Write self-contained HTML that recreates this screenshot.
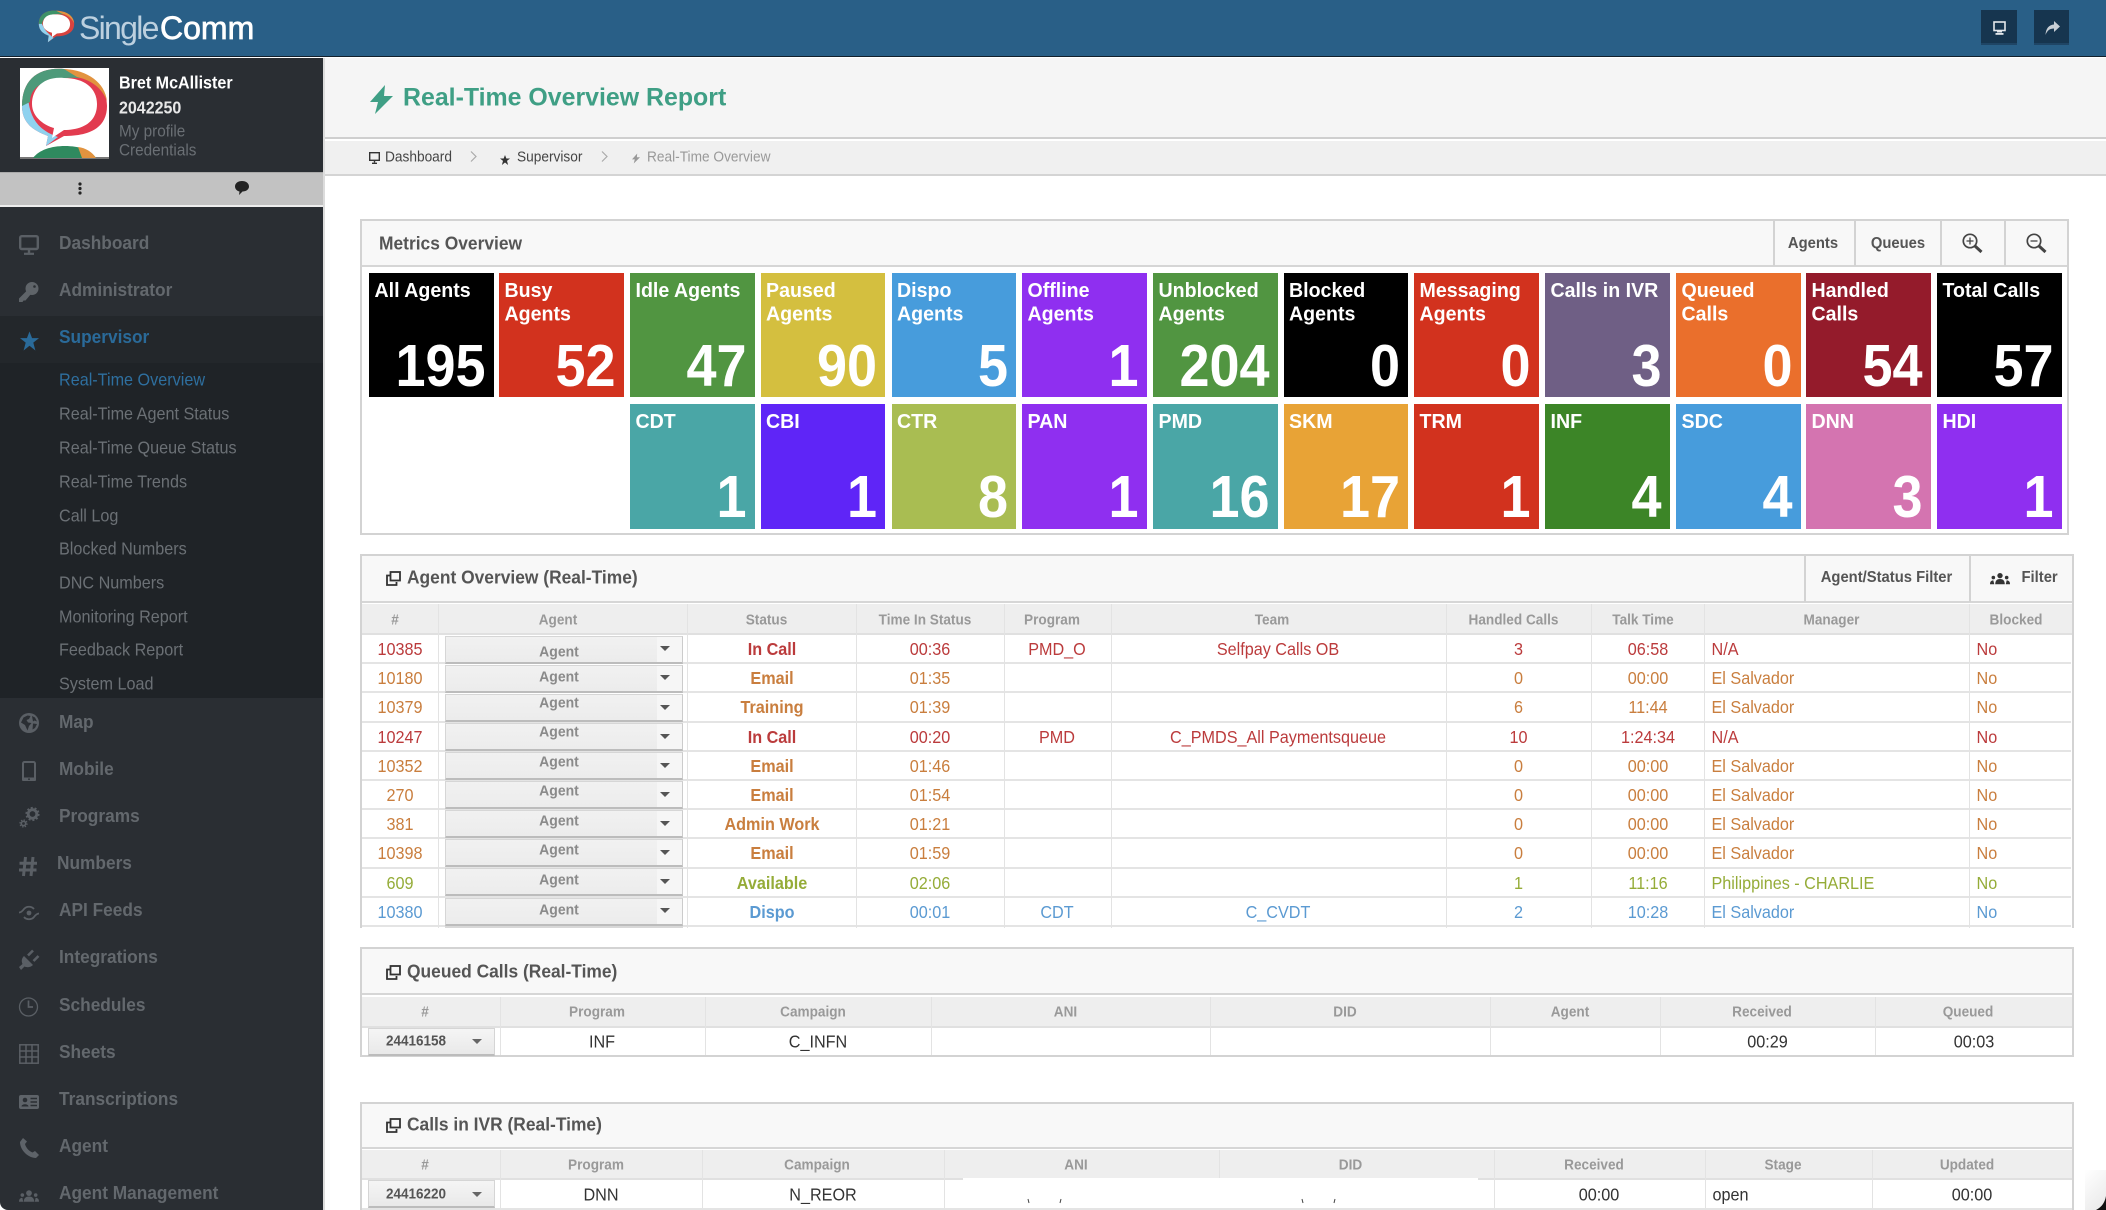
<!DOCTYPE html>
<html><head><meta charset="utf-8"><title>Real-Time Overview Report</title>
<style>
*{box-sizing:border-box}
html{margin:0;padding:0;width:2106px;height:1210px;overflow:hidden}
body{margin:0;padding:0;position:relative;width:2106px;height:1210px;overflow:hidden;background:#fff;font-family:"Liberation Sans",sans-serif}
.a,.c,.l,.e{position:absolute;white-space:nowrap;line-height:1;font-style:normal;text-decoration:none}
.c{transform:translate(-50%,-50%) scaleY(1.08)}
.l{transform:translateY(-50%) scaleY(1.08)}
svg{position:absolute;overflow:visible}
.b{position:absolute;display:block}
.m{left:59px;font-size:17.3px;font-weight:700;color:#63686d}
.s{left:59px;font-size:16.2px;color:#6b7075}
.pt{font-size:17.4px;font-weight:700;color:#555;left:407px}
.tl{position:absolute;width:124.6px;height:124px;overflow:hidden;color:#fff;font-weight:700}
.tl p{position:absolute;left:5.500px;top:6px;margin:0;font-size:19.6px;line-height:22px;white-space:nowrap;transform:scaleY(1.06);transform-origin:0 0}
.tl u{position:absolute;right:8px;top:93px;font-size:54px;line-height:1;text-decoration:none;transform:translateY(-50%) scaleY(1.1)}
.tl.w{height:125px}
.tl.w p{top:6px}
.tl.w u{top:93px}
.pan{position:absolute;border:2px solid #d3d3d3;background:#fff}
.ph{position:absolute;background:#f8f8f8;border-bottom:2px solid #d6d6d6}
.v{position:absolute;width:1px;background:#e3e3e3}
.vv{position:absolute;width:2px;background:#d3d3d3}
.th{position:absolute;background:#eee;border-bottom:2px solid #e0e0e0}
.h{font-size:13.600px;font-weight:700;color:#999}
.hh{font-size:14.800px;font-weight:700;color:#555}
.r{position:absolute;left:362px;width:1709px;height:29.2px;border-bottom:2px solid #e4e4e4;font-size:16.200px}
.r i{position:absolute;top:15px;white-space:nowrap;line-height:1;font-style:normal;transform:translate(-50%,-50%) scaleY(1.06)}
.r i.x{transform:translateY(-50%) scaleY(1.06)}
.r i.st{font-weight:700}
.n1{left:38px}.n2{left:410px}.n3{left:568px}.n4{left:695px}.n5{left:916px}.n6{left:1156.5px}.n7{left:1286px}.n8{left:1349.500px}.n9{left:1614.5px}
.red{color:#bb3b3c}.org{color:#c97e3e}.grn{color:#95ac38}.blu{color:#5b9ad2}
.dd{position:absolute;left:445px;width:238px;height:28px;background:linear-gradient(#f1f1f1,#ececec);border:1px solid #d6d6d6;border-bottom:2px solid #bcbcbc;border-right:1px solid #ccc}
.dd:after{content:"";position:absolute;left:211px;top:0;width:25px;height:100%;background:#f6f6f6}
.ag{left:559px;font-size:14px;font-weight:700;color:#8a8a8a}
.ar{position:absolute;left:660px;width:0;height:0;border-left:5px solid transparent;border-right:5px solid transparent;border-top:5px solid #555}
.btn{position:absolute;left:368px;width:127px;height:28px;background:linear-gradient(#f5f5f5,#e9e9e9);border:1px solid #d5d5d5;border-bottom:2px solid #bcbcbc}
.tx{font-size:16.200px;color:#333}
</style></head><body>

<!-- Top bar -->
<div class="b" style="left:0;top:0;width:2106px;height:57px;background:#295f87;border-bottom:1px solid #12202c"></div>
<svg style="left:38px;top:10px" width="37" height="33" viewBox="0 0 90 90" preserveAspectRatio="none">
<path d="M44 2C18 0 2 14 2 38c0 20 14 28 24 32l-2 18 20-16c22 0 44-8 44-34C88 14 66 4 44 2z" fill="#d8433f"/>
<path d="M2 38c0 20 14 28 24 32l-2 18 14-12C20 60 12 50 8 30z" fill="#8fd2ef"/>
<path d="M44 2C18 0 2 14 2 38l8 0C12 18 30 8 62 12 56 6 50 3 44 2z" fill="#3d9268"/>
<path d="M44 2c24 0 42 12 44 34-6-12-14-22-30-26z" fill="#e2933f"/>
<path d="M44 12C22 10 12 22 12 38c0 14 12 22 22 24l0 12 12-10c16 0 32-6 32-26C78 22 64 12 44 12z" fill="#fff"/>
</svg>
<span class="l" style="left:79px;top:28px;font-size:32px;letter-spacing:-1.7px;color:#bcd0df;transform:translateY(-50%) scaleY(1)">Single</span>
<span class="l" style="left:160px;top:28px;font-size:32px;color:#fff;-webkit-text-stroke:.7px #fff;transform:translateY(-50%) scaleY(1)">Comm</span>
<div class="b" style="left:1981px;top:10px;width:36px;height:35px;background:#16354f;border-bottom:2px solid #1f4565"></div>
<div class="b" style="left:2034px;top:10px;width:35px;height:35px;background:#16354f;border-bottom:2px solid #1f4565"></div>
<svg style="left:1993px;top:21px" width="13" height="14" viewBox="0 0 13 14"><rect x="1" y="1" width="11" height="8.5" fill="none" stroke="#e4e8ec" stroke-width="1.6"/><rect x="4" y="10" width="5" height="1.5" fill="#e4e8ec"/><rect x="2.5" y="12" width="8" height="1.8" fill="#e4e8ec"/></svg>
<svg style="left:2045px;top:21px" width="15" height="14" viewBox="0 0 15 14"><path d="M9 0l6 5.5L9 11V7.5C5 7.500 2.500 9 .5 14 .8 7.500 4 3.800 9 3.500z" fill="#c7ced5"/></svg>

<!-- Sidebar -->
<div class="b" style="left:0;top:58px;width:323px;height:1152px;background:#2a2e33;border-bottom-left-radius:8px"></div>
<div class="b" style="left:323px;top:58px;width:2px;height:1152px;background:#dcdcdc"></div>
<div class="b" style="left:20px;top:68px;width:89px;height:91px;background:#fff;border-bottom:2px solid #777"></div>
<svg style="left:20px;top:68px" width="89" height="90" viewBox="0 0 89 90">
<path d="M44 1C18-1 2 12 2 38c0 20 16 26 26 30l-2 10 18-10c22 0 43-6 43-30C87 14 66 3 44 1z" fill="#e23b4f"/>
<path d="M2 38c0 20 16 26 26 30l-2 10 12-9C18 62 10 50 8 30z" fill="#8fd2ef"/>
<path d="M44 1C18-1 2 12 2 38l8-4C10 16 30 8 62 10 56 5 50 2 44 1z" fill="#4d9a7a"/>
<path d="M44 1c24 1 41 14 43 32-4-10-12-20-30-24z" fill="#e2933f"/>
<path d="M44 10C22 8 12 22 12 36c0 14 14 22 22 24l-2 10 12-8c16 0 33-6 33-26C77 20 64 10 44 10z" fill="#fff"/>
<path d="M13 90c6-8 18-12 32-12 14 0 26 4 31 12z" fill="#2f8a5f"/>
<path d="M58 79c8 1 14 5 18 11H62z" fill="#e2933f"/>
</svg>
<span class="l" style="left:119px;top:82.500px;font-size:16.100px;font-weight:700;color:#fff">Bret McAllister</span>
<span class="l" style="left:119px;top:108.500px;font-size:16px;font-weight:700;color:#e8e8e8">2042250</span>
<span class="l" style="left:119px;top:131.500px;font-size:15.300px;color:#6a6f74">My profile</span>
<span class="l" style="left:119px;top:150.500px;font-size:15.300px;color:#6a6f74">Credentials</span>
<div class="b" style="left:0;top:172px;width:323px;height:35px;background:#c2c2c2;border-top:1px solid #aaa;border-bottom:2px solid #ededed"></div>
<svg style="left:78px;top:182px" width="4" height="13" viewBox="0 0 4 13"><circle cx="2" cy="2" r="1.6" fill="#222"/><circle cx="2" cy="6.500" r="1.600" fill="#222"/><circle cx="2" cy="11" r="1.600" fill="#222"/></svg>
<svg style="left:235px;top:181px" width="14" height="14" viewBox="0 0 14 14"><path d="M7 0C3 0 0 2.300 0 5.500 0 8 2 10 4.500 10.500L4 14l3.500-3.500C11 10.500 14 8.500 14 5.500 14 2.300 11 0 7 0z" fill="#222"/></svg>

<div class="b" style="left:0;top:316px;width:323px;height:47px;background:#23272b"></div>
<div class="b" style="left:0;top:363px;width:323px;height:335px;background:#1f2327"></div>

<!-- Dashboard -->
<svg style="left:19px;top:235px" width="20" height="20" viewBox="0 0 20 20" fill="none" stroke="#5a5f65" stroke-width="2.400"><rect x="1.200" y="1.200" width="17.600" height="12.800" rx="1.500"/><path d="M10 14v4"/><path d="M5 18.800h10" stroke-width="2.200"/></svg>
<!-- Administrator -->
<svg style="left:19px;top:282px" width="20" height="20" viewBox="0 0 20 20"><circle cx="13" cy="6.500" r="6.500" fill="#5f6469"/><circle cx="15.500" cy="4.500" r="1.300" fill="#2a2e33"/><path d="M8.500 8L0 16.500V20h3.500l1-1.500h2L12 12z" fill="#5f6469"/></svg>
<!-- Supervisor -->
<svg style="left:20px;top:331px" width="19" height="20" viewBox="0 0 20 20"><path d="M10 0l2.700 7H20l-6 4.700L16.200 20 10 15l-6.200 5L6 11.700 0 7h7.300z" fill="#2a6a99"/></svg>
<!-- Map -->
<svg style="left:19px;top:713px" width="20" height="20" viewBox="0 0 20 20"><circle cx="10" cy="10" r="10" fill="#5a5f65"/><path d="M4.500 4.500l4-2 3 .5-1.500 3-2.500 1 1.500 2.500 3.500.5L10 13l-1.500 4.500L6 12 2 9.500zM13 3l3 1.500 2 4-2.500-1-1.500 1zM14 10.500l4 .5-2 4-2.500 1.500z" fill="#2a2e33"/></svg>
<!-- Mobile -->
<svg style="left:22px;top:761px" width="14" height="20" viewBox="0 0 14 20"><rect x="1" y="1" width="12" height="18" rx="1.500" fill="none" stroke="#5a5f65" stroke-width="2"/><rect x="0" y="16.500" width="14" height="3.500" rx="1" fill="#5a5f65"/><circle cx="7" cy="18.200" r=".9" fill="#2a2e33"/></svg>
<!-- Programs -->
<svg style="left:19px;top:807px" width="21" height="22" viewBox="0 0 21 22" fill="none" stroke="#5a5f65"><circle cx="13.500" cy="7" r="4.300" stroke-width="2.800"/><circle cx="13.500" cy="7" r="6.200" stroke-width="1.800" stroke-dasharray="2 1.900"/><circle cx="4.500" cy="16.500" r="2.200" stroke-width="1.600"/><circle cx="4.500" cy="16.500" r="3.500" stroke-width="1.300" stroke-dasharray="1.400 1.350"/></svg>
<!-- Numbers -->
<svg style="left:19px;top:857px" width="18" height="19" viewBox="0 0 18 19" fill="none" stroke="#5a5f65" stroke-width="3"><path d="M6.500 0L4.500 19M14 0l-2 19M.5 6.300h17.500M0 13h17.500"/></svg>
<!-- API Feeds -->
<svg style="left:19px;top:906px" width="20" height="14" viewBox="0 0 20 14" fill="none" stroke="#5a5f65" stroke-width="1.800"><path d="M0 6.500c2 0 3.500-1.500 5-3.500 2.500-3 7.500-3 10 0M5 11c2.500 3 7.500 3 10 0 1.500-2 3-3.500 5-3.500"/><circle cx="10" cy="7" r="2.400" fill="#5a5f65" stroke="none"/></svg>
<!-- Integrations -->
<svg style="left:19px;top:949px" width="20" height="21" viewBox="0 0 20 21"><path d="M0 18l3.500-3C2 11.500 3 9 5 7l9 9c-2 2-5 3-8.500 1.500L2 21z" fill="#5a5f65"/><path d="M9 6.500L14 1.500M14.500 12l5-5" fill="none" stroke="#5a5f65" stroke-width="2.600"/></svg>
<!-- Schedules -->
<svg style="left:19px;top:997px" width="19" height="20" viewBox="0 0 19 20" fill="none" stroke="#5a5f65" stroke-width="1.300"><circle cx="9.500" cy="10" r="9"/><path d="M9.500 3.500V10H14" stroke-width="1.700"/></svg>
<!-- Sheets -->
<svg style="left:19px;top:1044px" width="20" height="20" viewBox="0 0 20 20" fill="none" stroke="#5a5f65" stroke-width="1.500"><rect x=".8" y=".8" width="18.400" height="18.400"/><path d="M0 7h20M0 13h20M7 0v20M13 0v20"/></svg>
<!-- Transcriptions -->
<svg style="left:19px;top:1095px" width="20" height="14" viewBox="0 0 20 14"><rect width="20" height="14" rx="2" fill="#5e6369"/><circle cx="6" cy="5" r="2.300" fill="#2a2e33"/><path d="M2.500 11.500c0-3 7-3 7 0z" fill="#2a2e33"/><path d="M11.500 3.500h6.500M11.500 7h6.500M11.500 10.500h6.500" stroke="#2a2e33" stroke-width="1.400"/></svg>
<!-- Agent -->
<svg style="left:20px;top:1138px" width="19" height="20" viewBox="0 0 19 20"><path d="M3 0L7 3.500 5 6C6 10 9 13 12.500 14.500L15 13l4 4-3 3C8 20 0 12 0 4z" fill="#5e6369"/></svg>
<!-- Agent Management -->
<svg style="left:19px;top:1190px" width="20" height="12" viewBox="0 0 21 12" fill="#5a5f65"><circle cx="10.500" cy="3" r="3"/><path d="M5 12c0-4 2.500-5.500 5.500-5.500S16 8 16 12z"/><circle cx="3.500" cy="5" r="1.900"/><path d="M0 12c0-3 1.500-4 3.500-4l1 4z"/><circle cx="17.500" cy="5" r="1.900"/><path d="M21 12c0-3-1.500-4-3.500-4l-1 4z"/></svg>

<span class="l m" style="top:243px">Dashboard</span>
<span class="l m" style="top:290px">Administrator</span>
<span class="l m" style="top:337px;color:#2a6a99">Supervisor</span>
<span class="l s" style="top:380px;color:#2e6f9f">Real-Time Overview</span>
<span class="l s" style="top:414px">Real-Time Agent Status</span>
<span class="l s" style="top:448px">Real-Time Queue Status</span>
<span class="l s" style="top:482px">Real-Time Trends</span>
<span class="l s" style="top:515.500px">Call Log</span>
<span class="l s" style="top:549px">Blocked Numbers</span>
<span class="l s" style="top:583px">DNC Numbers</span>
<span class="l s" style="top:616.500px">Monitoring Report</span>
<span class="l s" style="top:650px">Feedback Report</span>
<span class="l s" style="top:684px">System Load</span>
<span class="l m" style="top:721.500px">Map</span>
<span class="l m" style="top:768.500px">Mobile</span>
<span class="l m" style="top:815.500px">Programs</span>
<span class="l m" style="top:862.500px;left:57px">Numbers</span>
<span class="l m" style="top:909.500px">API Feeds</span>
<span class="l m" style="top:956.500px">Integrations</span>
<span class="l m" style="top:1005px">Schedules</span>
<span class="l m" style="top:1052px">Sheets</span>
<span class="l m" style="top:1099px">Transcriptions</span>
<span class="l m" style="top:1146px">Agent</span>
<span class="l m" style="top:1193px">Agent Management</span>

<!-- Page heading -->
<div class="b" style="left:325px;top:58px;width:1781px;height:81px;background:#f5f5f5;border-bottom:2px solid #cfcfcf"></div>
<div class="b" style="left:325px;top:140px;width:1781px;height:36px;background:#f0f0f0;border-top:1px solid #fff;border-bottom:2px solid #d4d4d4"></div>
<svg style="left:370px;top:85px" width="23" height="29" viewBox="0 0 23 29"><path d="M15 0L0 17h8L5 29l18-18h-9z" fill="#3f9f85"/></svg>
<span class="l" style="left:403px;top:97.500px;font-size:24.900px;font-weight:700;color:#3f9f85;transform:translateY(-50%)">Real-Time Overview Report</span>
<svg style="left:369px;top:152px" width="11" height="12" viewBox="0 0 11 12" fill="none" stroke="#333" stroke-width="1.400"><rect x=".7" y=".7" width="9.600" height="7.600"/><path d="M5.500 8.500v2M3 11.300h5"/></svg>
<span class="l" style="left:385px;top:156.500px;font-size:13.700px;color:#444">Dashboard</span>
<svg style="left:470px;top:151px" width="7" height="11" viewBox="0 0 7 11" fill="none" stroke="#aaa" stroke-width="1.200"><path d="M1 .5l5 5-5 5"/></svg>
<svg style="left:500px;top:155px" width="10" height="10" viewBox="0 0 20 20"><path d="M10 0l2.700 7H20l-6 4.700L16.200 20 10 15l-6.200 5L6 11.700 0 7h7.300z" fill="#333"/></svg>
<span class="l" style="left:517px;top:156.500px;font-size:13.700px;color:#444">Supervisor</span>
<svg style="left:601px;top:151px" width="7" height="11" viewBox="0 0 7 11" fill="none" stroke="#aaa" stroke-width="1.200"><path d="M1 .5l5 5-5 5"/></svg>
<svg style="left:632px;top:153px" width="8" height="11" viewBox="0 0 23 29"><path d="M15 0L0 17h8L5 29l18-18h-9z" fill="#999"/></svg>
<span class="l" style="left:647px;top:156.500px;font-size:13.700px;color:#999">Real-Time Overview</span>

<!-- Metrics -->
<div class="pan" style="left:360px;top:219px;width:1709px;height:316px"></div>
<div class="ph" style="left:362px;top:221px;width:1705px;height:46px"></div>
<span class="l" style="left:379px;top:243.500px;font-size:17.400px;font-weight:700;color:#555">Metrics Overview</span>
<b class="vv" style="left:1773px;top:221px;height:45px"></b>
<b class="vv" style="left:1854px;top:221px;height:45px"></b>
<b class="vv" style="left:1940px;top:221px;height:45px"></b>
<b class="vv" style="left:2004px;top:221px;height:45px"></b>
<span class="c hh" style="left:1813px;top:244px">Agents</span>
<span class="c hh" style="left:1898px;top:244px">Queues</span>
<svg style="left:1962px;top:233px" width="21" height="20" viewBox="0 0 21 20" fill="none" stroke="#444"><circle cx="8" cy="8" r="6.700" stroke-width="1.700"/><path d="M8 4.500v7M4.500 8h7" stroke-width="1.300"/><path d="M13 13l6.500 6" stroke-width="3"/></svg>
<svg style="left:2026px;top:233px" width="21" height="20" viewBox="0 0 21 20" fill="none" stroke="#444"><circle cx="8" cy="8" r="6.700" stroke-width="1.700"/><path d="M4.500 8h7" stroke-width="1.300"/><path d="M13 13l6.500 6" stroke-width="3"/></svg>

<div class="tl" style="left:369px;top:273px;background:#000"><p>All Agents</p><u>195</u></div>
<div class="tl" style="left:499px;top:273px;background:#d2321e"><p>Busy<br>Agents</p><u>52</u></div>
<div class="tl" style="left:630px;top:273px;background:#519541"><p>Idle Agents</p><u>47</u></div>
<div class="tl" style="left:760.500px;top:273px;background:#d4bf3f"><p>Paused<br>Agents</p><u>90</u></div>
<div class="tl" style="left:891.500px;top:273px;background:#479cdc"><p>Dispo<br>Agents</p><u>5</u></div>
<div class="tl" style="left:1022px;top:273px;background:#8f2ff0"><p>Offline<br>Agents</p><u>1</u></div>
<div class="tl" style="left:1153px;top:273px;background:#519541"><p>Unblocked<br>Agents</p><u>204</u></div>
<div class="tl" style="left:1283.500px;top:273px;background:#000"><p>Blocked<br>Agents</p><u>0</u></div>
<div class="tl" style="left:1414px;top:273px;background:#d2321e"><p>Messaging<br>Agents</p><u>0</u></div>
<div class="tl" style="left:1545px;top:273px;background:#6f5f85"><p>Calls in IVR</p><u>3</u></div>
<div class="tl" style="left:1676px;top:273px;background:#ea6f2c"><p>Queued<br>Calls</p><u>0</u></div>
<div class="tl" style="left:1806px;top:273px;background:#941b2b"><p>Handled<br>Calls</p><u>54</u></div>
<div class="tl" style="left:1937px;top:273px;background:#000"><p>Total Calls</p><u>57</u></div>

<div class="tl w" style="left:630px;top:404px;background:#4aa6a6"><p>CDT</p><u>1</u></div>
<div class="tl w" style="left:760.500px;top:404px;background:#5f25f7"><p>CBI</p><u>1</u></div>
<div class="tl w" style="left:891.500px;top:404px;background:#a9bd52"><p>CTR</p><u>8</u></div>
<div class="tl w" style="left:1022px;top:404px;background:#8f2ff0"><p>PAN</p><u>1</u></div>
<div class="tl w" style="left:1153px;top:404px;background:#4aa6a6"><p>PMD</p><u>16</u></div>
<div class="tl w" style="left:1283.500px;top:404px;background:#e8a336"><p>SKM</p><u>17</u></div>
<div class="tl w" style="left:1414px;top:404px;background:#d2321e"><p>TRM</p><u>1</u></div>
<div class="tl w" style="left:1545px;top:404px;background:#3c8527"><p>INF</p><u>4</u></div>
<div class="tl w" style="left:1676px;top:404px;background:#479cdc"><p>SDC</p><u>4</u></div>
<div class="tl w" style="left:1806px;top:404px;background:#d474b0"><p>DNN</p><u>3</u></div>
<div class="tl w" style="left:1937px;top:404px;background:#8f2ff0"><p>HDI</p><u>1</u></div>

<!-- Agent Overview -->
<div class="b" style="left:360px;top:554px;width:1714px;height:374px;border:2px solid #d3d3d3;border-bottom:0"></div>
<div class="ph" style="left:362px;top:556px;width:1710px;height:47px"></div>
<svg style="left:386px;top:571px" width="15" height="15" viewBox="0 0 15 15" fill="none" stroke="#333" stroke-width="1.800"><rect x="4.500" y="1" width="9.500" height="8.500"/><path d="M4 4.500H1V14h9.500v-3"/></svg>
<span class="l pt" style="top:578px">Agent Overview (Real-Time)</span>
<b class="vv" style="left:1804px;top:556px;height:46px"></b>
<b class="vv" style="left:1969px;top:556px;height:46px"></b>
<span class="c hh" style="left:1886.500px;top:578px">Agent/Status Filter</span>
<svg style="left:1990px;top:572px" width="20" height="13" viewBox="0 0 21 12" fill="#333"><circle cx="10.500" cy="3" r="2.800"/><path d="M5.500 12c0-4 2-5.500 5-5.500s5 1.500 5 5.500z"/><circle cx="3.500" cy="5" r="1.900"/><path d="M0 12c0-3 1.500-4 3.500-4l1 4z"/><circle cx="17.500" cy="5" r="1.900"/><path d="M21 12c0-3-1.500-4-3.500-4l-1 4z"/></svg>
<span class="l hh" style="left:2021.500px;top:578px">Filter</span>
<div class="th" style="left:362px;top:604px;width:1710px;height:31px"></div>
<span class="c h" style="left:395px;top:619.500px">#</span>
<span class="c h" style="left:558px;top:619.500px">Agent</span>
<span class="c h" style="left:766.500px;top:619.500px">Status</span>
<span class="c h" style="left:925px;top:619.500px">Time In Status</span>
<span class="c h" style="left:1052px;top:619.500px">Program</span>
<span class="c h" style="left:1272px;top:619.500px">Team</span>
<span class="c h" style="left:1513.500px;top:619.500px">Handled Calls</span>
<span class="c h" style="left:1643px;top:619.500px">Talk Time</span>
<span class="c h" style="left:1831.500px;top:619.500px">Manager</span>
<span class="c h" style="left:2016px;top:619.500px">Blocked</span>

<div class="r red" style="top:635px"><i class="n1">10385</i><i class="n2 st">In Call</i><i class="n3">00:36</i><i class="n4">PMD_O</i><i class="n5">Selfpay Calls OB</i><i class="n6">3</i><i class="n7">06:58</i><i class="n8 x">N/A</i><i class="n9 x">No</i></div>
<div class="r org" style="top:664.200px"><i class="n1">10180</i><i class="n2 st">Email</i><i class="n3">01:35</i><i class="n6">0</i><i class="n7">00:00</i><i class="n8 x">El Salvador</i><i class="n9 x">No</i></div>
<div class="r org" style="top:693.400px"><i class="n1">10379</i><i class="n2 st">Training</i><i class="n3">01:39</i><i class="n6">6</i><i class="n7">11:44</i><i class="n8 x">El Salvador</i><i class="n9 x">No</i></div>
<div class="r red" style="top:722.600px"><i class="n1">10247</i><i class="n2 st">In Call</i><i class="n3">00:20</i><i class="n4">PMD</i><i class="n5">C_PMDS_All Paymentsqueue</i><i class="n6">10</i><i class="n7">1:24:34</i><i class="n8 x">N/A</i><i class="n9 x">No</i></div>
<div class="r org" style="top:751.800px"><i class="n1">10352</i><i class="n2 st">Email</i><i class="n3">01:46</i><i class="n6">0</i><i class="n7">00:00</i><i class="n8 x">El Salvador</i><i class="n9 x">No</i></div>
<div class="r org" style="top:781px"><i class="n1">270</i><i class="n2 st">Email</i><i class="n3">01:54</i><i class="n6">0</i><i class="n7">00:00</i><i class="n8 x">El Salvador</i><i class="n9 x">No</i></div>
<div class="r org" style="top:810.200px"><i class="n1">381</i><i class="n2 st">Admin Work</i><i class="n3">01:21</i><i class="n6">0</i><i class="n7">00:00</i><i class="n8 x">El Salvador</i><i class="n9 x">No</i></div>
<div class="r org" style="top:839.400px"><i class="n1">10398</i><i class="n2 st">Email</i><i class="n3">01:59</i><i class="n6">0</i><i class="n7">00:00</i><i class="n8 x">El Salvador</i><i class="n9 x">No</i></div>
<div class="r grn" style="top:868.600px"><i class="n1">609</i><i class="n2 st">Available</i><i class="n3">02:06</i><i class="n6">1</i><i class="n7">11:16</i><i class="n8 x">Philippines - CHARLIE</i><i class="n9 x">No</i></div>
<div class="r blu" style="top:897.800px"><i class="n1">10380</i><i class="n2 st">Dispo</i><i class="n3">00:01</i><i class="n4">CDT</i><i class="n5">C_CVDT</i><i class="n6">2</i><i class="n7">10:28</i><i class="n8 x">El Salvador</i><i class="n9 x">No</i></div>

<b class="v" style="left:438px;top:604px;height:324px"></b>
<b class="v" style="left:687px;top:604px;height:324px"></b>
<b class="v" style="left:856px;top:604px;height:324px"></b>
<b class="v" style="left:1004px;top:604px;height:324px"></b>
<b class="v" style="left:1111px;top:604px;height:324px"></b>
<b class="v" style="left:1446px;top:604px;height:324px"></b>
<b class="v" style="left:1591px;top:604px;height:324px"></b>
<b class="v" style="left:1704px;top:604px;height:324px"></b>
<b class="v" style="left:1969px;top:604px;height:324px"></b>

<div class="dd" style="top:636px"></div><div class="dd" style="top:665px"></div><div class="dd" style="top:694px"></div><div class="dd" style="top:723px"></div><div class="dd" style="top:752px"></div><div class="dd" style="top:781px"></div><div class="dd" style="top:810px"></div><div class="dd" style="top:839px"></div><div class="dd" style="top:868px"></div><div class="dd" style="top:898px"></div>
<div class="b" style="left:445px;top:926px;width:238px;height:2px;background:#d8d8d8"></div>
<span class="c ag" style="top:651px">Agent</span><span class="c ag" style="top:676px">Agent</span><span class="c ag" style="top:702px">Agent</span><span class="c ag" style="top:731px">Agent</span><span class="c ag" style="top:761px">Agent</span><span class="c ag" style="top:790px">Agent</span><span class="c ag" style="top:820px">Agent</span><span class="c ag" style="top:849px">Agent</span><span class="c ag" style="top:878.500px">Agent</span><span class="c ag" style="top:908.500px">Agent</span>
<b class="ar" style="top:646px"></b><b class="ar" style="top:675px"></b><b class="ar" style="top:705px"></b><b class="ar" style="top:734px"></b><b class="ar" style="top:763px"></b><b class="ar" style="top:792px"></b><b class="ar" style="top:821px"></b><b class="ar" style="top:850px"></b><b class="ar" style="top:879px"></b><b class="ar" style="top:908px"></b>

<!-- Queued -->
<div class="pan" style="left:360px;top:947px;width:1714px;height:110px"></div>
<div class="ph" style="left:362px;top:949px;width:1710px;height:46px"></div>
<svg style="left:386px;top:965px" width="15" height="15" viewBox="0 0 15 15" fill="none" stroke="#333" stroke-width="1.800"><rect x="4.500" y="1" width="9.500" height="8.500"/><path d="M4 4.500H1V14h9.500v-3"/></svg>
<span class="l pt" style="top:972px">Queued Calls (Real-Time)</span>
<div class="th" style="left:362px;top:997px;width:1710px;height:31px"></div>
<b class="v" style="left:500px;top:997px;height:58px"></b><b class="v" style="left:705px;top:997px;height:58px"></b><b class="v" style="left:931px;top:997px;height:58px"></b><b class="v" style="left:1210px;top:997px;height:58px"></b><b class="v" style="left:1490px;top:997px;height:58px"></b><b class="v" style="left:1660px;top:997px;height:58px"></b><b class="v" style="left:1875px;top:997px;height:58px"></b>
<span class="c h" style="left:425px;top:1012px">#</span><span class="c h" style="left:597px;top:1012px">Program</span><span class="c h" style="left:813px;top:1012px">Campaign</span><span class="c h" style="left:1065.500px;top:1012px">ANI</span><span class="c h" style="left:1345px;top:1012px">DID</span><span class="c h" style="left:1570px;top:1012px">Agent</span><span class="c h" style="left:1762px;top:1012px">Received</span><span class="c h" style="left:1968px;top:1012px">Queued</span>
<div class="btn" style="top:1028px"></div>
<span class="c" style="left:416px;top:1041px;font-size:13.500px;font-weight:700;color:#555">24416158</span>
<b class="ar" style="left:472px;top:1039px;border-top-color:#666"></b>
<span class="c tx" style="left:602px;top:1041.500px">INF</span><span class="c tx" style="left:818px;top:1041.500px">C_INFN</span><span class="c tx" style="left:1767.500px;top:1041.500px">00:29</span><span class="c tx" style="left:1974px;top:1041.500px">00:03</span>

<!-- IVR -->
<div class="b" style="left:360px;top:1102px;width:1714px;height:108px;border:2px solid #d3d3d3;border-bottom:0;background:#fff"></div>
<div class="ph" style="left:362px;top:1104px;width:1710px;height:45px"></div>
<svg style="left:386px;top:1118px" width="15" height="15" viewBox="0 0 15 15" fill="none" stroke="#333" stroke-width="1.800"><rect x="4.500" y="1" width="9.500" height="8.500"/><path d="M4 4.500H1V14h9.500v-3"/></svg>
<span class="l pt" style="top:1124.500px">Calls in IVR (Real-Time)</span>
<div class="th" style="left:362px;top:1150px;width:1710px;height:30px"></div>
<b class="v" style="left:500px;top:1150px;height:60px"></b><b class="v" style="left:702px;top:1150px;height:60px"></b><b class="v" style="left:944px;top:1150px;height:60px"></b><b class="v" style="left:1219px;top:1150px;height:60px"></b><b class="v" style="left:1494px;top:1150px;height:60px"></b><b class="v" style="left:1705px;top:1150px;height:60px"></b><b class="v" style="left:1872px;top:1150px;height:60px"></b>
<div class="b" style="left:362px;top:1208px;width:1710px;height:2px;background:#e4e4e4"></div>
<span class="c h" style="left:425px;top:1164.500px">#</span><span class="c h" style="left:596px;top:1164.500px">Program</span><span class="c h" style="left:817px;top:1164.500px">Campaign</span><span class="c h" style="left:1076px;top:1164.500px">ANI</span><span class="c h" style="left:1350.500px;top:1164.500px">DID</span><span class="c h" style="left:1594px;top:1164.500px">Received</span><span class="c h" style="left:1783px;top:1164.500px">Stage</span><span class="c h" style="left:1967px;top:1164.500px">Updated</span>
<div class="btn" style="top:1180px"></div>
<span class="c" style="left:416px;top:1194px;font-size:13.500px;font-weight:700;color:#555">24416220</span>
<b class="ar" style="left:472px;top:1192px;border-top-color:#666"></b>
<span class="c tx" style="left:601px;top:1194.500px">DNN</span><span class="c tx" style="left:823px;top:1194.500px">N_REOR</span><span class="c tx" style="left:1599px;top:1194.500px">00:00</span><span class="l tx" style="left:1712.500px;top:1194.500px">open</span><span class="c tx" style="left:1972px;top:1194.500px">00:00</span>
<div class="b" style="left:963px;top:1178px;width:515px;height:30px;background:#fff"></div>
<svg style="left:1025px;top:1198px" width="40" height="6" viewBox="0 0 40 6" stroke="#444"><path d="M3 1l1 4M35 5l1-4"/></svg>
<svg style="left:1299px;top:1198px" width="40" height="6" viewBox="0 0 40 6" stroke="#444"><path d="M3 1l1 4M35 5l1-4"/></svg>

<!-- window corner -->
<div class="b" style="left:2085px;top:1170px;width:21px;height:40px;background:linear-gradient(135deg,#fff,#e8e8e8)"></div>
<svg style="left:2096px;top:1196px" width="10" height="14" viewBox="0 0 10 14"><path d="M10 0C9 6 6 11 0 14h10z" fill="#111"/></svg>
</body></html>
